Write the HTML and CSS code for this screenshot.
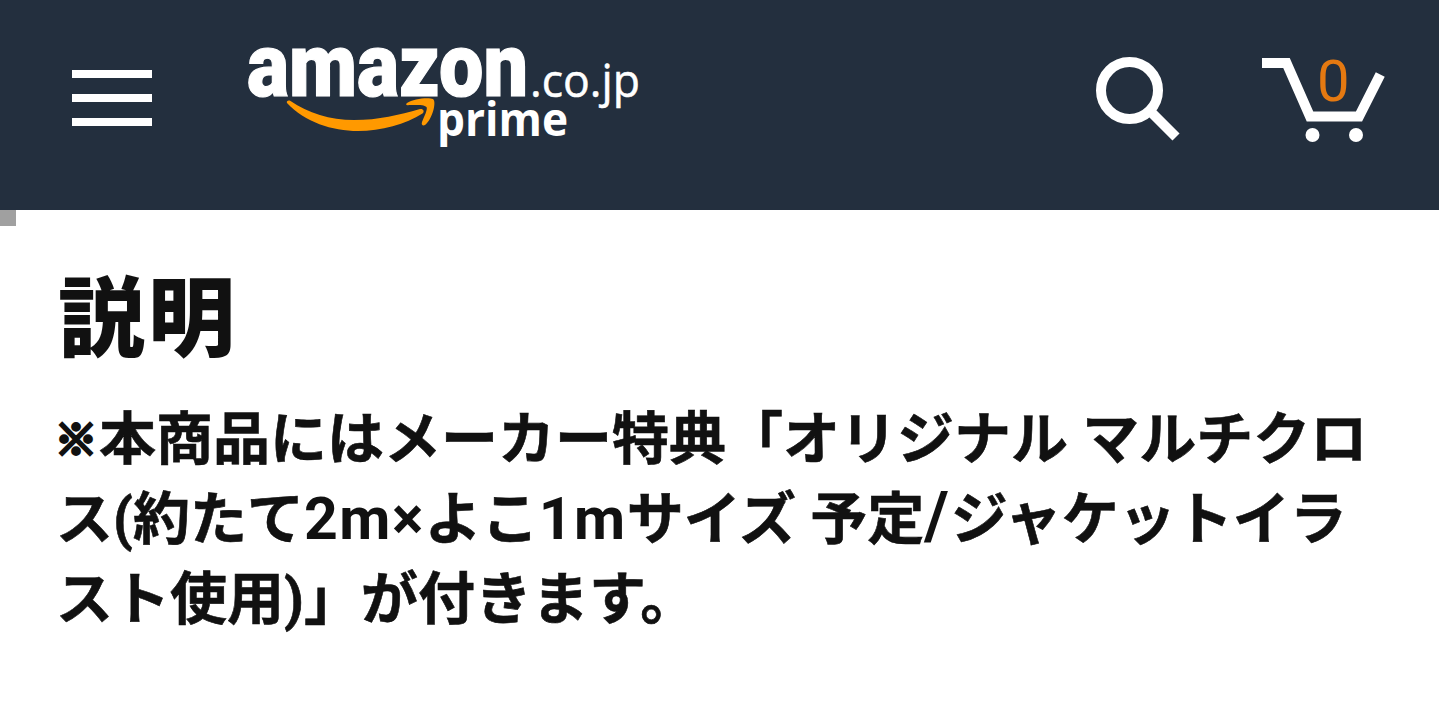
FILE: index.html
```
<!DOCTYPE html>
<html lang="ja">
<head>
    <meta charset="UTF-8">
    <meta name="viewport" content="width=device-width, initial-scale=1.0">
    <title>Amazon.co.jp</title>
    <link rel="stylesheet" href="styles.css">
</head>
<body>
    <header class="header">
        <button class="menu" aria-label="menu">
            <span></span>
            <span></span>
            <span></span>
        </button>
        <svg class="logo" width="400" height="110" viewBox="0 0 400 110">
            <text class="logo-name" x="5" y="56" textLength="281" lengthAdjust="spacingAndGlyphs">amazon</text>
            <text class="logo-domain" x="288" y="56.500" textLength="110" lengthAdjust="spacingAndGlyphs">.co.jp</text>
            <text class="logo-prime" x="195" y="96" textLength="131" lengthAdjust="spacingAndGlyphs">prime</text>
            <path class="smile" d="M48.500 61C66 73 88 80 112 80C137 80 157 75 178 69C181 68.500 183 71 180.500 73.500C164 84 139 91 116 91C90 91 63 82 45 63C44 61 46.500 60 48.500 61Z"/>
            <path class="smile" d="M165 63C171 58.500 187 57 191 59C195 62 190 80 183 85C181 86 179 85 180 82C182 77 186 69 184.500 67C182 64.500 174 65 167 65C164 66 163.500 64 165 63Z"/>
        </svg>
        <svg class="search" width="88" height="88" viewBox="0 0 88 88">
            <circle cx="35.500" cy="35.500" r="28.500"/>
            <path d="M56 56L82 82"/>
        </svg>
        <div class="cart">
            <svg width="124" height="88" viewBox="0 0 124 88">
                <path class="frame" d="M6 8H25.500L49 61.500H98L117 24"/>
                <circle cx="51.500" cy="80" r="7"/>
                <circle cx="95" cy="80" r="7"/>
            </svg>
            <span class="count">0</span>
        </div>
    </header>
    <main class="content">
        <span class="marker"></span>
        <h1>説明</h1>
        <p>
            <span class="line"><span class="kome">※</span>本商品にはメーカー特典「オリジナル マルチクロ</span>
            <span class="line">ス(約たて<span class="latin">2m×</span>よこ<span class="latin">1m</span>サイズ 予定<span class="slash">/</span>ジャケットイラ</span>
            <span class="line">スト使用)」が付きます。</span>
        </p>
    </main>
</body>
</html>
```
FILE: styles.css
```
body {
    margin: 0;
    background: #fff;
    color: #111;
    font-family: Roboto, 'Noto Sans CJK JP', sans-serif;
    overflow: hidden;
}

.header {
    box-sizing: border-box;
    display: flex;
    align-items: flex-start;
    height: 210px;
    padding: 0 54px 0 72px;
    background: #232f3e;
}

.menu {
    display: flex;
    flex-direction: column;
    gap: 16px;
    width: 80px;
    margin: 70px 0 0;
    padding: 0;
    border: none;
    background: none;
}

.menu span {
    height: 8px;
    background: #fff;
}

.logo {
    margin: 40px auto 0 90px;
    overflow: visible;
}

.logo text {
    fill: #fff;
}

.logo .logo-name {
    font: 900 89px Roboto, sans-serif;
    stroke: #fff;
    stroke-width: 1.2px;
}

.logo .logo-domain {
    font: 400 46px 'Open Sans', sans-serif;
    stroke: #fff;
    stroke-width: 0.5px;
}

.logo .logo-prime {
    font: 700 46px 'Open Sans', sans-serif;
}

.smile {
    fill: #ff9900;
}

.search {
    margin: 55px 79px 0 0;
    fill: none;
    stroke: #fff;
    stroke-width: 10;
}

.cart {
    position: relative;
    width: 124px;
    margin-top: 55px;
}

.cart svg {
    display: block;
    fill: #fff;
    overflow: visible;
}

.cart .frame {
    fill: none;
    stroke: #fff;
    stroke-width: 10;
    stroke-linecap: square;
}

.count {
    position: absolute;
    top: -7px;
    left: 56px;
    font-size: 58px;
    line-height: 66px;
    color: #e47911;
}

.content {
    position: relative;
    padding: 44px 56px 0;
}

.marker {
    position: absolute;
    top: 0;
    left: 0;
    width: 16px;
    height: 16px;
    background: #a0a0a0;
}

h1 {
    margin: 0;
    padding-left: 2px;
    font-size: 87px;
    font-weight: 900;
    line-height: 132px;
    letter-spacing: 3px;
}

p {
    margin: 14px 0 0;
    font-size: 57px;
    font-weight: 700;
    line-height: 80px;
    -webkit-text-stroke: 0.6px #111;
}

.line {
    display: block;
    white-space: nowrap;
}

.kome {
    display: inline-block;
    width: 43px;
    font-size: 42px;
    line-height: 1;
    text-indent: -1px;
    vertical-align: 4px;
    -webkit-text-stroke: 3.5px #111;
}

.latin {
    font-size: 59px;
    letter-spacing: 1.5px;
    line-height: 1;
    -webkit-text-stroke: 0;
}

.slash {
    font-size: 66px;
    letter-spacing: 2px;
    line-height: 1;
    -webkit-text-stroke: 0;
}
```
